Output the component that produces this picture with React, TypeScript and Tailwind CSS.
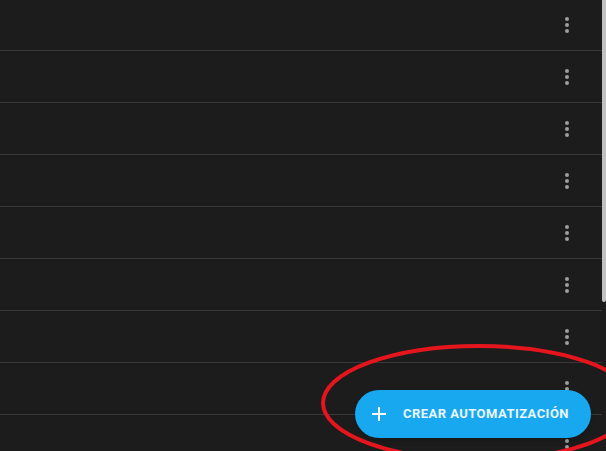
import React from "react";

const rows = Array.from({ length: 9 }, (_, i) => i);

function DotsIcon() {
  return (
    <svg width="24" height="24" viewBox="0 0 24 24" className="fill-[#9e9e9e]">
      <path d="M12,16A2,2 0 0,1 14,18A2,2 0 0,1 12,20A2,2 0 0,1 10,18A2,2 0 0,1 12,16M12,10A2,2 0 0,1 14,12A2,2 0 0,1 12,14A2,2 0 0,1 10,12A2,2 0 0,1 12,10M12,4A2,2 0 0,1 14,6A2,2 0 0,1 12,8A2,2 0 0,1 10,6A2,2 0 0,1 12,4Z" />
    </svg>
  );
}

function PlusIcon() {
  return (
    <svg width="24" height="24" viewBox="0 0 24 24" className="fill-white">
      <path d="M19,13H13V19H11V13H5V11H11V5H13V11H19V13Z" />
    </svg>
  );
}

export default function App() {
  return (
    <div className="relative w-[606px] h-[451px] overflow-hidden bg-[#1c1c1c] flex" style={{ fontFamily: "Roboto, 'Liberation Sans', sans-serif" }}>
      {/* list */}
      <div className="flex-1 flex flex-col -mt-px">
        {rows.map((r) => (
          <div key={r} className="h-[52px] shrink-0 flex items-center justify-end border-b border-[#383838] pr-[23px]">
            <DotsIcon />
          </div>
        ))}
      </div>

      {/* scrollbar */}
      <div className="w-[4px] shrink-0">
        <div className="h-[302px] w-full bg-[#c1c1c1] rounded-b-sm" />
      </div>

      {/* FAB */}
      <button className="absolute left-[355px] top-[390px] h-[48px] w-[236px] rounded-full bg-[#18a8f0] flex items-center pl-3 gap-3 shadow-md">
        <PlusIcon />
        <span className="text-[13px] font-bold tracking-[0.035em] text-[#eaf6fd]">CREAR AUTOMATIZACIÓN</span>
      </button>

      {/* annotation */}
      <svg className="absolute inset-0 pointer-events-none" width="606" height="451">
        <ellipse cx="479" cy="403" rx="156" ry="57" fill="none" stroke="#e4151d" strokeWidth="4" />
      </svg>
    </div>
  );
}
